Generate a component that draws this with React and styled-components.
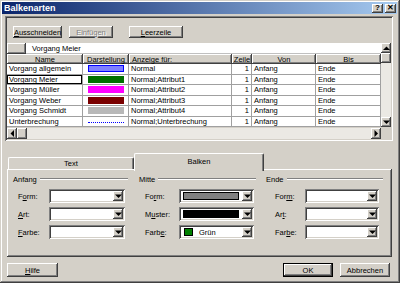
import React from "react";
import styled, { createGlobalStyle, css } from "styled-components";

const GlobalStyle = createGlobalStyle`
  html, body { margin: 0; padding: 0; background: #d4d0c8; }
  body {
    font-family: "Liberation Sans", Arial, sans-serif;
    font-size: 7.5px;
    color: #000;
  }
  * { box-sizing: border-box; }
`;

const raised = css`
  background: #d4d0c8;
  box-shadow: inset -1px -1px #404040, inset 1px 1px #fff,
    inset -2px -2px #808080, inset 2px 2px #d4d0c8;
`;

const sunken = css`
  box-shadow: inset 1px 1px #808080, inset -1px -1px #fff,
    inset 2px 2px #404040, inset -2px -2px #d4d0c8;
`;

const Window = styled.div`
  width: 400px;
  height: 283px;
  background: #d4d0c8;
  box-shadow: inset -1px -1px #404040, inset 1px 1px #d4d0c8,
    inset -2px -2px #808080, inset 2px 2px #fff;
  padding: 2px 3px 0 2px;
  display: flex;
  flex-direction: column;
  overflow: hidden;
`;

const TitleBar = styled.div`
  height: 12px;
  background: linear-gradient(to right, #0a246a, #a6caf0);
  display: flex;
  align-items: center;
  padding: 0 1px 0 2px;
`;

const Title = styled.div`
  flex: 1;
  color: #fff;
  font-weight: bold;
  font-size: 9px;
`;

const CaptionButton = styled.div`
  ${raised};
  width: 11px;
  height: 9px;
  margin-left: 2px;
  display: flex;
  align-items: center;
  justify-content: center;
  font-weight: bold;
  font-size: 8px;
  line-height: 1;
`;

const Frame = styled.div`
  ${sunken};
  margin: 2px 0 0 3px;
  width: 388px;
  height: 125px;
  padding: 2px;
  display: flex;
  flex-direction: column;
`;

const Toolbar = styled.div`
  height: 25px;
  display: flex;
  align-items: flex-start;
  padding: 8px 0 0 6px;
`;

const Button = styled.div`
  ${raised};
  width: ${(p) => p.$w}px;
  height: ${(p) => p.$h || 12}px;
  margin-right: ${(p) => p.$mr || 0}px;
  display: flex;
  align-items: center;
  justify-content: center;
  color: ${(p) => (p.$disabled ? "#808080" : "#000")};
  text-shadow: ${(p) => (p.$disabled ? "1px 1px #fff" : "none")};
  ${(p) =>
    p.$default &&
    css`
      box-shadow: inset 0 0 0 1px #000, inset -2px -2px #404040,
        inset 2px 2px #fff, inset -3px -3px #808080;
    `}
`;

const GridArea = styled.div`
  display: flex;
  height: 96px;
`;

const GridMain = styled.div`
  width: 374px;
  display: flex;
  flex-direction: column;
`;

const EditRow = styled.div`
  height: 11px;
  display: flex;
`;

const Corner = styled.div`
  ${raised};
  width: 19px;
`;

const EditCell = styled.div`
  flex: 1;
  background: #fff;
  padding-left: 6px;
  display: flex;
  align-items: center;
  border-bottom: 1px solid #c0c0c0;
`;

const Row = styled.div`
  display: flex;
  height: ${(p) => p.$h}px;
  background: ${(p) => (p.$header ? "#d4d0c8" : "#fff")};
`;

const HeadCell = styled.div`
  ${raised};
  width: ${(p) => p.$w}px;
  display: flex;
  align-items: center;
  justify-content: ${(p) => (p.$left ? "flex-start" : "center")};
  padding-left: ${(p) => (p.$left ? 3 : 0)}px;
  white-space: nowrap;
  overflow: hidden;
`;

const Cell = styled.div`
  width: ${(p) => p.$w}px;
  border-right: 1px solid #a0a0a0;
  border-bottom: 1px solid #a0a0a0;
  display: flex;
  align-items: center;
  justify-content: ${(p) => (p.$right ? "flex-end" : "flex-start")};
  padding: 0 2px 0 2px;
  white-space: nowrap;
  overflow: hidden;
  ${(p) =>
    p.$focus &&
    css`
      box-shadow: inset 0 0 0 1px #000;
    `}
`;

const Swatch = styled.div`
  width: 36px;
  height: 7px;
  margin-left: 3px;
  background: ${(p) => p.$fill};
  border: 1px solid ${(p) => p.$line || p.$fill};
`;

const DotLine = styled.div`
  width: 36px;
  height: 2px;
  margin: 4px 0 0 3px;
  border-top: 1px dotted #0000ff;
`;

const HScroll = styled.div`
  height: 11px;
  display: flex;
  background: #ebe9e4;
`;

const VScroll = styled.div`
  width: 10px;
  display: flex;
  flex-direction: column;
  background: #ebe9e4;
`;

const ScrollBtn = styled.div`
  ${raised};
  width: 10px;
  height: ${(p) => p.$h || 10}px;
  display: flex;
  align-items: center;
  justify-content: center;
  flex-shrink: 0;
`;

const Track = styled.div`
  flex: 1;
`;

const ScrollCorner = styled.div`
  height: 12px;
  background: #d4d0c8;
`;

const TabStrip = styled.div`
  margin: 12px 0 0 6px;
  height: 16px;
  display: flex;
  align-items: flex-end;
`;

const Tab = styled.div`
  width: ${(p) => p.$w}px;
  height: ${(p) => (p.$active ? 18 : 12)}px;
  background: #d4d0c8;
  border-top: 1px solid #fff;
  border-left: 1px solid #fff;
  border-right: 1px solid #404040;
  box-shadow: inset -1px 0 #808080;
  border-radius: 2px 2px 0 0;
  display: flex;
  align-items: ${(p) => (p.$active ? "flex-start" : "center")};
  padding-top: ${(p) => (p.$active ? 3 : 0)}px;
  justify-content: center;
  margin-bottom: ${(p) => (p.$active ? -2 : 0)}px;
  position: relative;
  z-index: ${(p) => (p.$active ? 1 : 0)};
`;

const TabPanel = styled.div`
  margin-left: 5px;
  width: 385px;
  height: 88px;
  background: #d4d0c8;
  box-shadow: inset -1px -1px #404040, inset 1px 1px #fff,
    inset -2px -2px #808080;
  padding: 5px 0 0 5px;
  display: flex;
`;

const Group = styled.div`
  width: ${(p) => p.$w}px;
  margin-right: ${(p) => p.$mr || 0}px;
  display: flex;
  flex-direction: column;
`;

const GroupHead = styled.div`
  height: 10px;
  display: flex;
  align-items: center;
  margin-bottom: 5px;
`;

const GroupTitle = styled.span`
  padding: 0 3px 0 1px;
`;

const GroupLine = styled.div`
  flex: 1;
  height: 2px;
  border-top: 1px solid #808080;
  border-bottom: 1px solid #fff;
`;

const Field = styled.div`
  height: 14px;
  margin-bottom: 4px;
  display: flex;
  align-items: center;
`;

const Label = styled.div`
  width: ${(p) => p.$w}px;
  margin-left: ${(p) => p.$indent}px;
`;

const Combo = styled.div`
  ${sunken};
  background: #fff;
  width: ${(p) => p.$w}px;
  height: 14px;
  padding: 2px;
  display: flex;
`;

const ComboValue = styled.div`
  flex: 1;
  display: flex;
  align-items: center;
  padding: 1px 2px;
`;

const Bar = styled.div`
  flex: 1;
  height: 100%;
  background: ${(p) => p.$fill};
  border: 1px solid #000;
  margin-right: 1px;
`;

const ColorBox = styled.div`
  width: 9px;
  height: 8px;
  background: #008000;
  border: 1px solid #000;
  margin: 0 6px 0 1px;
`;

const Footer = styled.div`
  margin: 6px 0 0 5px;
  width: 383px;
  display: flex;
`;

const Spacer = styled.div`
  flex: 1;
`;

const Arrow = ({ dir }) => {
  const pts = {
    up: "0,4 7,4 3.5,0.5",
    down: "0,0.5 7,0.5 3.5,4",
    left: "4,0 4,7 0.5,3.5",
    right: "0.5,0 0.5,7 4,3.5",
  }[dir];
  const vertical = dir === "up" || dir === "down";
  return (
    <svg width={vertical ? 7 : 4} height={vertical ? 4 : 7}>
      <polygon points={pts} fill="#000" />
    </svg>
  );
};

const cols = [
  { key: "name", label: "Name", w: 76 },
  { key: "look", label: "Darstellung", w: 46 },
  { key: "show", label: "Anzeige für:", w: 103, left: true },
  { key: "line", label: "Zeile", w: 20 },
  { key: "from", label: "Von", w: 64 },
  { key: "to", label: "Bis", w: 65 },
];

const rows = [
  { name: "Vorgang allgemein", fill: "#8080ff", line: "#0000ff", show: "Normal" },
  { name: "Vorgang Meier", fill: "#007000", show: "Normal;Attribut1", focus: true },
  { name: "Vorgang Müller", fill: "#ff00ff", show: "Normal;Attribut2" },
  { name: "Vorgang Weber", fill: "#7a0000", show: "Normal;Attribut3" },
  { name: "Vorgang Schmidt", fill: "#b8b8b8", show: "Normal;Attribut4" },
  { name: "Unterbrechung", dotted: true, show: "Normal;Unterbrechung" },
];

function EmptyCombo({ w }) {
  return (
    <Combo $w={w}>
      <ComboValue />
      <ScrollBtn $h={10}>
        <Arrow dir="down" />
      </ScrollBtn>
    </Combo>
  );
}

export default function App() {
  return (
    <>
      <GlobalStyle />
      <Window>
        <TitleBar>
          <Title>Balkenarten</Title>
          <CaptionButton>?</CaptionButton>
          <CaptionButton>✕</CaptionButton>
        </TitleBar>

        <Frame>
          <Toolbar>
            <Button $w={49} $mr={7}>
              <u>A</u>usschneiden
            </Button>
            <Button $w={44} $mr={16} $disabled>
              Einfügen
            </Button>
            <Button $w={54}>
              <u>L</u>eerzeile
            </Button>
          </Toolbar>

          <GridArea>
            <GridMain>
              <EditRow>
                <Corner />
                <EditCell>Vorgang Meier</EditCell>
              </EditRow>
              <Row $h={10} $header>
                {cols.map((c) => (
                  <HeadCell key={c.key} $w={c.w} $left={c.left}>
                    {c.label}
                  </HeadCell>
                ))}
              </Row>
              {rows.map((r) => (
                <Row key={r.name} $h={10.5}>
                  <Cell $w={76} $focus={r.focus}>
                    {r.name}
                  </Cell>
                  <Cell $w={46}>
                    {r.dotted ? <DotLine /> : <Swatch $fill={r.fill} $line={r.line} />}
                  </Cell>
                  <Cell $w={103}>{r.show}</Cell>
                  <Cell $w={20} $right>
                    1
                  </Cell>
                  <Cell $w={64}>Anfang</Cell>
                  <Cell $w={65}>Ende</Cell>
                </Row>
              ))}
              <Track />
              <HScroll>
                <ScrollBtn $h={11}>
                  <Arrow dir="left" />
                </ScrollBtn>
                <ScrollBtn $h={11} />
                <Track />
                <ScrollBtn $h={11}>
                  <Arrow dir="right" />
                </ScrollBtn>
              </HScroll>
            </GridMain>
            <VScroll>
              <ScrollBtn>
                <Arrow dir="up" />
              </ScrollBtn>
              <ScrollBtn />
              <Track />
              <ScrollBtn>
                <Arrow dir="down" />
              </ScrollBtn>
              <ScrollCorner />
            </VScroll>
          </GridArea>
        </Frame>

        <TabStrip>
          <Tab $w={126}>Text</Tab>
          <Tab $w={130} $active>
            Balken
          </Tab>
        </TabStrip>
        <TabPanel>
          <Group $w={116} $mr={10}>
            <GroupHead>
              <GroupTitle>Anfang</GroupTitle>
              <GroupLine />
            </GroupHead>
            <Field>
              <Label $w={31} $indent={6}>
                F<u>o</u>rm:
              </Label>
              <EmptyCombo w={76} />
            </Field>
            <Field>
              <Label $w={31} $indent={6}>
                <u>A</u>rt:
              </Label>
              <EmptyCombo w={76} />
            </Field>
            <Field>
              <Label $w={31} $indent={6}>
                <u>F</u>arbe:
              </Label>
              <EmptyCombo w={76} />
            </Field>
          </Group>

          <Group $w={118} $mr={9}>
            <GroupHead>
              <GroupTitle>Mitte</GroupTitle>
              <GroupLine />
            </GroupHead>
            <Field>
              <Label $w={34} $indent={7}>
                Fo<u>r</u>m:
              </Label>
              <Combo $w={75}>
                <ComboValue>
                  <Bar $fill="#808080" />
                </ComboValue>
                <ScrollBtn $h={10}>
                  <Arrow dir="down" />
                </ScrollBtn>
              </Combo>
            </Field>
            <Field>
              <Label $w={34} $indent={7}>
                M<u>u</u>ster:
              </Label>
              <Combo $w={75}>
                <ComboValue>
                  <Bar $fill="#000" />
                </ComboValue>
                <ScrollBtn $h={10}>
                  <Arrow dir="down" />
                </ScrollBtn>
              </Combo>
            </Field>
            <Field>
              <Label $w={34} $indent={7}>
                Farb<u>e</u>:
              </Label>
              <Combo $w={75}>
                <ComboValue>
                  <ColorBox />
                  Grün
                </ComboValue>
                <ScrollBtn $h={10}>
                  <Arrow dir="down" />
                </ScrollBtn>
              </Combo>
            </Field>
          </Group>

          <Group $w={118}>
            <GroupHead>
              <GroupTitle>Ende</GroupTitle>
              <GroupLine />
            </GroupHead>
            <Field>
              <Label $w={30} $indent={10}>
                For<u>m</u>:
              </Label>
              <EmptyCombo w={74} />
            </Field>
            <Field>
              <Label $w={30} $indent={10}>
                Ar<u>t</u>:
              </Label>
              <EmptyCombo w={74} />
            </Field>
            <Field>
              <Label $w={30} $indent={10}>
                Far<u>b</u>e:
              </Label>
              <EmptyCombo w={74} />
            </Field>
          </Group>
        </TabPanel>

        <Footer>
          <Button $w={51} $h={14}>
            <u>H</u>ilfe
          </Button>
          <Spacer />
          <Button $w={50} $h={14} $mr={7} $default>
            OK
          </Button>
          <Button $w={50} $h={14}>
            Abbrechen
          </Button>
        </Footer>
      </Window>
    </>
  );
}
